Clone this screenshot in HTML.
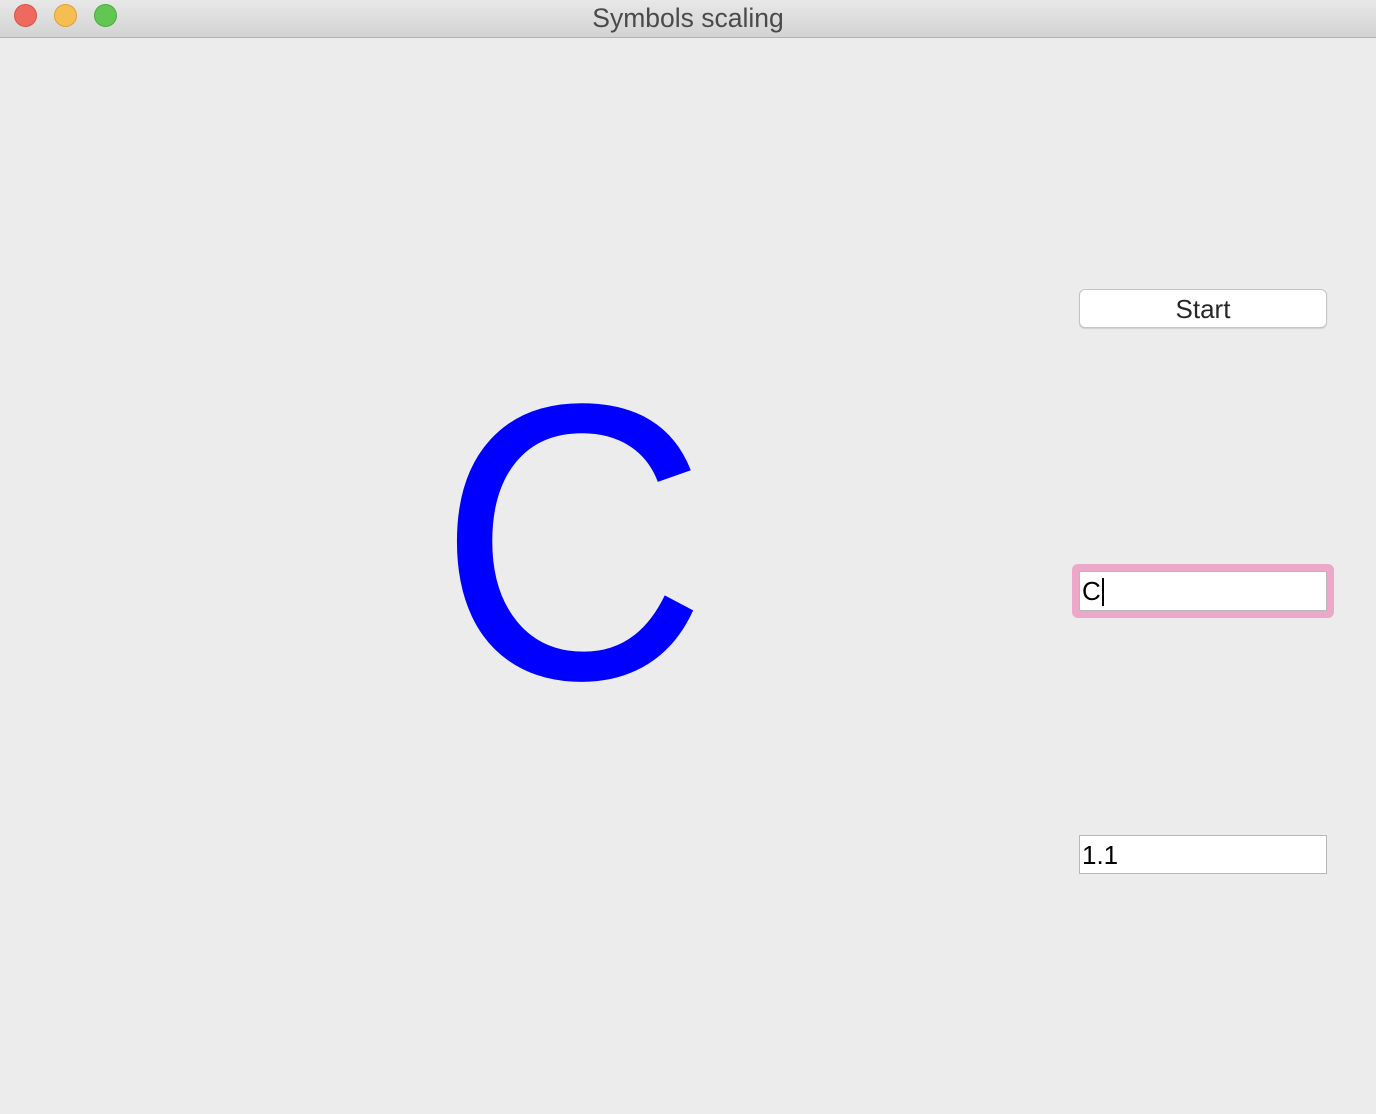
<!DOCTYPE html>
<html><head><meta charset="utf-8"><style>
html,body{margin:0;padding:0;}
body{width:1376px;height:1114px;background:#ececec;position:relative;overflow:hidden;font-family:"Liberation Sans",sans-serif;}
.tb{position:absolute;left:0;top:0;width:1376px;height:37px;background:linear-gradient(#e8e8e8,#d3d3d3);border-bottom:1px solid #b1b1b1;}
.dot{position:absolute;top:4px;width:23px;height:23px;border-radius:50%;box-sizing:border-box;}
.title{position:absolute;left:0;width:1376px;top:3px;text-align:center;font-size:26.5px;color:#4a4a4a;}
.btn{position:absolute;left:1079px;top:289px;width:248px;height:39px;box-sizing:border-box;background:#fff;border:1px solid #c4c4c4;border-radius:6px;box-shadow:0 1px 1px rgba(0,0,0,.12);text-align:center;font-size:26px;line-height:38px;color:#262626;}
.fld{position:absolute;left:1079px;width:248px;height:39px;box-sizing:border-box;background:#fff;border:1px solid #b8b8b8;font-size:26px;line-height:39px;color:#000;padding-left:2px;}
.focus{position:absolute;left:1072px;top:564px;width:262px;height:54px;border-radius:6px;background:#eca8c9;}
</style></head><body>
<div class="tb">
<div class="dot" style="left:14px;background:#ee6a5f;border:1px solid #d5544a"></div>
<div class="dot" style="left:54px;background:#f6be50;border:1px solid #d9a23b"></div>
<div class="dot" style="left:94px;background:#62c655;border:1px solid #4ea942"></div>
<div class="title">Symbols scaling</div>
</div>
<svg style="position:absolute;left:0;top:0" width="1376" height="1114"><text x="438" y="0" transform="translate(0,678) scale(1,1.055)" font-family="Liberation Sans" font-size="373" fill="#0000ff">C</text></svg>
<div class="btn">Start</div>
<div class="focus"></div>
<div class="fld" style="top:571px;height:40px;">C<span style="display:inline-block;width:2px;height:28px;background:#000;vertical-align:-6px;margin-left:1px"></span></div>
<div class="fld" style="top:835px;">1.1</div>
</body></html>
